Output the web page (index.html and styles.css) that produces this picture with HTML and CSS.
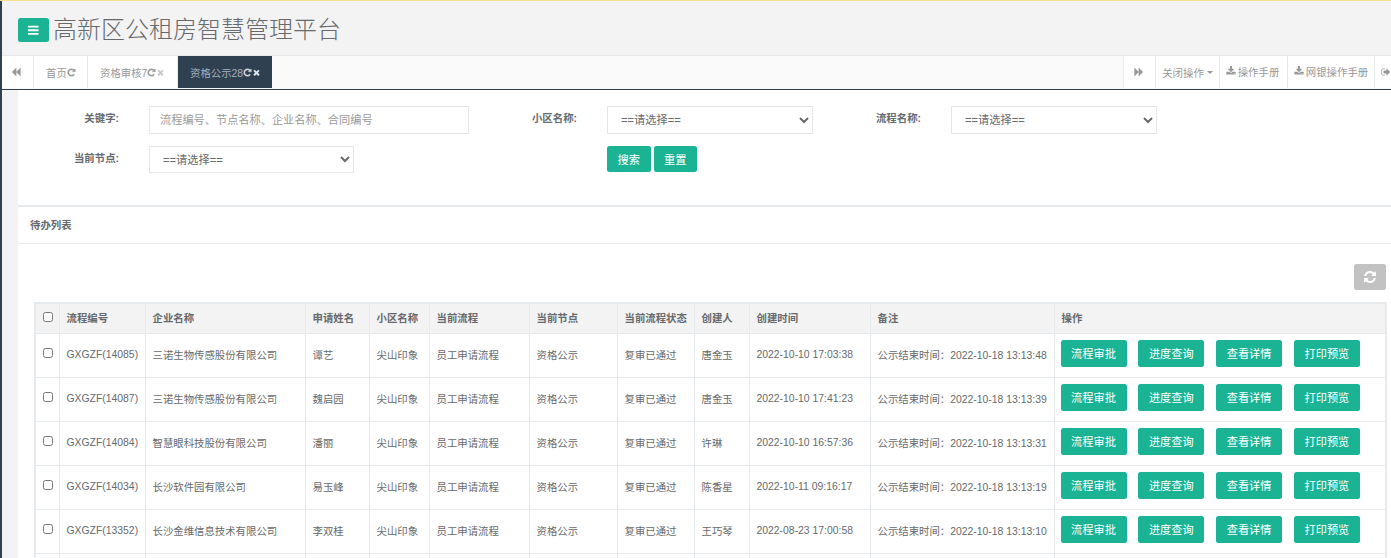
FILE: index.html
```html
<!DOCTYPE html>
<html lang="zh-CN">
<head>
<meta charset="utf-8">
<title>高新区公租房智慧管理平台</title>
<link rel="stylesheet" href="styles.css">
</head>
<body>
<svg class="sprite" xmlns="http://www.w3.org/2000/svg" aria-hidden="true">
  <symbol id="i-bars" viewBox="0 0 1792 1792"><path d="M1664 1344v128q0 26-19 45t-45 19h-1408q-26 0-45-19t-19-45v-128q0-26 19-45t45-19h1408q26 0 45 19t19 45zm0-512v128q0 26-19 45t-45 19h-1408q-26 0-45-19t-19-45v-128q0-26 19-45t45-19h1408q26 0 45 19t19 45zm0-512v128q0 26-19 45t-45 19h-1408q-26 0-45-19t-19-45v-128q0-26 19-45t45-19h1408q26 0 45 19t19 45z"/></symbol>
  <symbol id="i-back" viewBox="0 0 1792 1792"><path d="M1683 141q19-19 32-13t13 32v1472q0 26-13 32t-32-13l-710-710q-9-9-13-19v710q0 26-13 32t-32-13l-710-710q-19-19-19-45t19-45l710-710q19-19 32-13t13 32v710q4-10 13-19z"/></symbol>
  <symbol id="i-fwd" viewBox="0 0 1792 1792"><path d="M109 1651q-19 19-32 13t-13-32v-1472q0-26 13-32t32 13l710 710q9 9 13 19v-710q0-26 13-32t32 13l710 710q19 19 19 45t-19 45l-710 710q-19 19-32 13t-13-32v-710q-4 10-13 19z"/></symbol>
  <symbol id="i-refresh" viewBox="0 0 1792 1792"><path d="M1639 1056q0 5-1 7-64 268-268 434.5t-478 166.5q-146 0-282.5-55t-243.5-157l-129 129q-19 19-45 19t-45-19-19-45v-448q0-26 19-45t45-19h448q26 0 45 19t19 45-19 45l-137 137q71 66 161 102t187 36q134 0 250-65t186-179q11-17 53-117 8-23 30-23h192q13 0 22.5 9.5t9.5 22.5zm25-800v448q0 26-19 45t-45 19h-448q-26 0-45-19t-19-45 19-45l138-138q-148-137-349-137-134 0-250 65t-186 179q-11 17-53 117-8 23-30 23h-199q-13 0-22.5-9.5t-9.5-22.5v-7q65-268 270-434.5t480-166.5q146 0 284 55.5t245 156.5l130-129q19-19 45-19t45 19 19 45z"/></symbol>
  <symbol id="i-repeat" viewBox="0 0 1792 1792"><path d="M1664 256v448q0 26-19 45t-45 19h-448q-42 0-59-40-17-39 14-69l138-138q-148-137-349-137-104 0-198.5 40.5t-163.5 109.5-109.5 163.5-40.5 198.5 40.5 198.5 109.5 163.5 163.5 109.5 198.5 40.5q119 0 225-52t179-147q7-10 23-12 15 0 25 9l137 138q9 8 9.5 20.5t-7.5 22.5q-109 132-264 204.5t-327 72.5q-156 0-298-61t-245-164-164-245-61-298 61-298 164-245 245-164 298-61q147 0 284.5 55.5t244.5 156.5l130-129q29-31 70-14 39 17 39 59z"/></symbol>
  <symbol id="i-close" viewBox="0 0 1792 1792"><path d="M1490 1322q0 40-28 68l-136 136q-28 28-68 28t-68-28l-294-294-294 294q-28 28-68 28t-68-28l-136-136q-28-28-28-68t28-68l294-294-294-294q-28-28-28-68t28-68l136-136q28-28 68-28t68 28l294 294 294-294q28-28 68-28t68 28l136 136q28 28 28 68t-28 68l-294 294 294 294q28 28 28 68z"/></symbol>
  <symbol id="i-download" viewBox="0 0 1792 1792"><path d="M1344 1344q0-26-19-45t-45-19-45 19-19 45 19 45 45 19 45-19 19-45zm256 0q0-26-19-45t-45-19-45 19-19 45 19 45 45 19 45-19 19-45zm128-224v320q0 40-28 68t-68 28h-1472q-40 0-68-28t-28-68v-320q0-40 28-68t68-28h465l135 136q58 56 136 56t136-56l136-136h464q40 0 68 28t28 68zm-325-569q17 41-14 70l-448 448q-18 19-45 19t-45-19l-448-448q-31-29-14-70 17-39 59-39h256v-448q0-26 19-45t45-19h256q26 0 45 19t19 45v448h256q42 0 59 39z"/></symbol>
  <symbol id="i-signout" viewBox="0 0 1792 1792"><path d="M704 1440q0 4 1 20t.5 26.5-3 23.5-10 19.5-20.5 6.5h-320q-119 0-203.5-84.5t-84.5-203.5v-704q0-119 84.5-203.5t203.5-84.5h320q13 0 22.5 9.5t9.5 22.5q0 4 1 20t.5 26.5-3 23.5-10 19.5-20.5 6.5h-320q-66 0-113 47t-47 113v704q0 66 47 113t113 47h312l11.5 1 11.5 3 8 5.5 7 9 2 13.5zm928-544q0 26-19 45l-544 544q-19 19-45 19t-45-19-19-45v-288h-448q-26 0-45-19t-19-45v-384q0-26 19-45t45-19h448v-288q0-26 19-45t45-19 45 19l544 544q19 19 19 45z"/></symbol>
</svg>

<div class="topline"></div>
<div class="shell">
  <aside class="rail"></aside>
  <div class="main">
    <header class="header">
      <button class="menu-btn" type="button"><svg class="ico-bars"><use href="#i-bars"/></svg></button>
      <h1 class="brand">高新区公租房智慧管理平台</h1>
    </header>

    <nav class="tabbar">
      <a class="tab-arrow"><svg class="ico"><use href="#i-back"/></svg></a>
      <div class="tabs">
        <a class="tab tab-home">首页<svg class="ico"><use href="#i-repeat"/></svg></a>
        <a class="tab tab-audit">资格审核7<svg class="ico"><use href="#i-repeat"/></svg><svg class="ico ico-x"><use href="#i-close"/></svg></a>
        <a class="tab tab-active">资格公示28<svg class="ico"><use href="#i-repeat"/></svg><svg class="ico ico-x"><use href="#i-close"/></svg></a>
      </div>
      <div class="tools">
        <a class="tool tool-fwd"><svg class="ico"><use href="#i-fwd"/></svg></a>
        <a class="tool tool-close">关闭操作<span class="caret"></span></a>
        <a class="tool tool-man"><svg class="ico"><use href="#i-download"/></svg> 操作手册</a>
        <a class="tool tool-bank"><svg class="ico"><use href="#i-download"/></svg> 网银操作手册</a>
        <a class="tool tool-exit"><svg class="ico"><use href="#i-signout"/></svg></a>
      </div>
    </nav>

    <div class="body">
      <section class="filter">
        <label class="flabel">关键字:</label>
        <input class="control" type="text" placeholder="流程编号、节点名称、企业名称、合同编号">
        <label class="flabel">小区名称:</label>
        <select class="control"><option>==请选择==</option></select>
        <label class="flabel">流程名称:</label>
        <select class="control"><option>==请选择==</option></select>

        <label class="flabel">当前节点:</label>
        <select class="control control-short"><option>==请选择==</option></select>
        <span></span>
        <div class="filter-btns">
          <button class="btn btn-sm" type="button">搜索</button>
          <button class="btn btn-sm" type="button">重置</button>
        </div>
      </section>

      <section class="panel">
        <h2 class="panel-title">待办列表</h2>
        <div class="toolbar">
          <button class="refresh" type="button"><svg class="ico-refresh"><use href="#i-refresh"/></svg></button>
        </div>
        <table class="grid">
          <colgroup>
            <col class="c-check"><col class="c-no"><col class="c-co"><col class="c-name"><col class="c-area"><col class="c-flow"><col class="c-node"><col class="c-state"><col class="c-user"><col class="c-time"><col class="c-note"><col class="c-ops">
          </colgroup>
          <thead>
            <tr><th class="cell-check"><input type="checkbox"></th><th>流程编号</th><th>企业名称</th><th>申请姓名</th><th>小区名称</th><th>当前流程</th><th>当前节点</th><th>当前流程状态</th><th>创建人</th><th>创建时间</th><th>备注</th><th>操作</th></tr>
          </thead>
          <tbody>
            <tr><td class="cell-check"><input type="checkbox"></td><td>GXGZF(14085)</td><td>三诺生物传感股份有限公司</td><td>谭艺</td><td>尖山印象</td><td>员工申请流程</td><td>资格公示</td><td>复审已通过</td><td>唐金玉</td><td>2022-10-10 17:03:38</td><td>公示结束时间：2022-10-18 13:13:48</td><td><div class="ops"><button class="btn" type="button">流程审批</button><button class="btn" type="button">进度查询</button><button class="btn" type="button">查看详情</button><button class="btn" type="button">打印预览</button></div></td></tr>
            <tr><td class="cell-check"><input type="checkbox"></td><td>GXGZF(14087)</td><td>三诺生物传感股份有限公司</td><td>魏启园</td><td>尖山印象</td><td>员工申请流程</td><td>资格公示</td><td>复审已通过</td><td>唐金玉</td><td>2022-10-10 17:41:23</td><td>公示结束时间：2022-10-18 13:13:39</td><td><div class="ops"><button class="btn" type="button">流程审批</button><button class="btn" type="button">进度查询</button><button class="btn" type="button">查看详情</button><button class="btn" type="button">打印预览</button></div></td></tr>
            <tr><td class="cell-check"><input type="checkbox"></td><td>GXGZF(14084)</td><td>智慧眼科技股份有限公司</td><td>潘丽</td><td>尖山印象</td><td>员工申请流程</td><td>资格公示</td><td>复审已通过</td><td>许琳</td><td>2022-10-10 16:57:36</td><td>公示结束时间：2022-10-18 13:13:31</td><td><div class="ops"><button class="btn" type="button">流程审批</button><button class="btn" type="button">进度查询</button><button class="btn" type="button">查看详情</button><button class="btn" type="button">打印预览</button></div></td></tr>
            <tr><td class="cell-check"><input type="checkbox"></td><td>GXGZF(14034)</td><td>长沙软件园有限公司</td><td>易玉峰</td><td>尖山印象</td><td>员工申请流程</td><td>资格公示</td><td>复审已通过</td><td>陈香星</td><td>2022-10-11 09:16:17</td><td>公示结束时间：2022-10-18 13:13:19</td><td><div class="ops"><button class="btn" type="button">流程审批</button><button class="btn" type="button">进度查询</button><button class="btn" type="button">查看详情</button><button class="btn" type="button">打印预览</button></div></td></tr>
            <tr><td class="cell-check"><input type="checkbox"></td><td>GXGZF(13352)</td><td>长沙金维信息技术有限公司</td><td>李双桂</td><td>尖山印象</td><td>员工申请流程</td><td>资格公示</td><td>复审已通过</td><td>王巧琴</td><td>2022-08-23 17:00:58</td><td>公示结束时间：2022-10-18 13:13:10</td><td><div class="ops"><button class="btn" type="button">流程审批</button><button class="btn" type="button">进度查询</button><button class="btn" type="button">查看详情</button><button class="btn" type="button">打印预览</button></div></td></tr>
            <tr><td class="cell-check"></td><td></td><td></td><td></td><td></td><td></td><td></td><td></td><td></td><td></td><td></td><td></td></tr>
          </tbody>
        </table>
      </section>
    </div>
  </div>
</div>
</body>
</html>
```
FILE: styles.css
```css
* { box-sizing: border-box; }
html, body { height: 558px; overflow: hidden; }
body {
  margin: 0;
  font-family: "Liberation Sans", "Noto Sans CJK SC", sans-serif;
  font-size: 10.4px;
  color: #676a6c;
  background: #f3f3f4;
}
.sprite { display: none; }
.topline { height: 1px; background: #f8e08e; }
.shell { display: flex; height: 557px; }
.rail { width: 2px; flex: none; background: #2f4050; }
.main { flex: 1; min-width: 0; display: flex; flex-direction: column; }

.ico { width: 10px; height: 10px; fill: currentColor; flex: none; }

/* header */
.header {
  height: 55px;
  flex: none;
  display: flex;
  align-items: center;
  padding: 4px 0 0 16px;
  background: #f3f3f4;
  border-bottom: 1px solid #e7eaec;
}
.menu-btn {
  width: 31px;
  height: 24px;
  padding: 0;
  border: 0;
  border-radius: 2.5px;
  background: #1ab394;
  color: #fff;
  display: flex;
  align-items: center;
  justify-content: center;
}
.ico-bars { width: 12.5px; height: 12.5px; fill: currentColor; }
.brand { margin: 0 0 0 4px; font-size: 24px; font-weight: 300; line-height: 30px; color: #676a6c; }

/* tabs */
.tabbar {
  height: 34px;
  flex: none;
  display: flex;
  padding-bottom: 1px;
  background: #fafafa;
  border-bottom: 1px solid #2f4050;
  color: #999;
}
.tab-arrow {
  width: 32px;
  flex: none;
  display: flex;
  align-items: center;
  justify-content: center;
  background: #fff;
  border-right: 1px solid #e7eaec;
  padding-right: 3px;
}
.tabs { flex: 1; display: flex; }
.tab {
  display: flex;
  align-items: center;
  padding-left: 12px;
  background: #fff;
  border-right: 1px solid #e7eaec;
}
.tab-home { width: 54px; }
.tab-audit { width: 90px; }
.tab-active { width: 94px; background: #2f4050; color: #a7b1c2; border-right: 0; }
.tab .ico { width: 9px; height: 9px; stroke: currentColor; stroke-width: 60; }
.tab .ico-x { width: 9px; height: 9px; color: #c8c8c8; stroke: none; }
.tab-active .ico { color: #d5dae2; }
.tab-active .ico-x { color: #dfe3ea; }
.tools { display: flex; flex: none; background: #fff; }
.tool {
  display: flex;
  align-items: center;
  gap: 2px;
  justify-content: center;
  border-left: 1px solid #e7eaec;
  white-space: nowrap;
}
.tool-fwd { width: 32px; padding-right: 2px; }
.tool-close { width: 64px; }
.tool-man { width: 68px; padding-bottom: 2px; padding-right: 2px; }
.tool-bank { width: 87px; padding-bottom: 2px; }
.tool-exit { width: 17px; justify-content: flex-start; padding-left: 6px; }
.tool-man .ico, .tool-bank .ico { color: #999; }
.caret {
  width: 0;
  height: 0;
  margin-left: 1px;
  margin-top: 1px;
  border-left: 3.2px solid transparent;
  border-right: 3.2px solid transparent;
  border-top: 3.2px solid #999;
}

/* content */
.body {
  flex: 1;
  min-height: 0;
  margin-left: 16px;
  background: #fff;
  overflow: hidden;
}
.filter {
  height: 117px;
  padding-top: 16px;
  display: grid;
  grid-template-columns: 101px 350px 108px 236px 108px 236px;
  grid-auto-rows: 28px;
  row-gap: 12px;
  align-content: start;
  border-bottom: 2px solid #e7eaec;
}
.flabel {
  font-weight: 700;
  text-align: right;
  line-height: 25px;
  white-space: nowrap;
}
.control {
  height: 28px;
  margin-left: 30px;
  padding: 0 10px;
  border: 1px solid #e5e6e7;
  background: #fff;
  color: #676a6c;
  font: inherit;
  font-size: 11.2px;
  border-radius: 0;
}
.control::placeholder { color: #999; opacity: 1; }
input.control { width: 320px; }
select.control { width: 206px; padding: 0 9px; }
select.control-short { width: 205px; height: 27px; }
.filter-btns { margin-left: 30px; display: flex; gap: 3px; align-items: flex-start; white-space: nowrap; }

.btn {
  width: 66px;
  height: 27px;
  padding: 0;
  border: 0;
  border-radius: 2.5px;
  background: #1ab394;
  color: #fff;
  font: inherit;
  font-size: 11.2px;
}
.btn-sm { width: 43.5px; height: 26px; }

/* list panel */
.panel-title {
  margin: 0;
  height: 37px;
  padding-left: 12px;
  font-size: 10.4px;
  font-weight: 700;
  line-height: 37px;
  border-bottom: 1px solid #e7eaec;
}
.toolbar { height: 58px; padding: 20px 5px 0 0; display: flex; justify-content: flex-end; align-items: flex-start; }
.refresh {
  width: 32px;
  height: 26px;
  padding: 0;
  border: 0;
  border-radius: 2.5px;
  background: #c2c2c2;
  color: #fff;
  display: flex;
  align-items: center;
  justify-content: center;
}
.ico-refresh { width: 14px; height: 14px; fill: currentColor; }

.grid {
  margin-left: 16px;
  width: 1351px;
  table-layout: fixed;
  border-collapse: collapse;
  border: 2px solid #e7eaec;
}
.c-check { width: 24px; }
.c-no { width: 86px; }
.c-co { width: 160px; }
.c-name { width: 64px; }
.c-area { width: 60px; }
.c-flow { width: 100px; }
.c-node { width: 88px; }
.c-state { width: 77px; }
.c-user { width: 55px; }
.c-time { width: 121px; }
.c-note { width: 184px; }
.c-ops { width: 332px; }
.grid th, .grid td {
  border: 1px solid #e7eaec;
  padding: 0 0 2px 7px;
  text-align: left;
  white-space: nowrap;
}
.grid th { height: 30px; background: #f3f3f4; font-weight: 700; }
.grid td { height: 44px; }
.grid th.cell-check { padding: 0 0 2px 7px; }
.grid td.cell-check { padding: 0 0 4px 7px; }
.grid input[type="checkbox"] { display: block; width: 10.4px; height: 10.4px; margin: 0; }
.ops { display: flex; gap: 11.8px; margin-left: -1px; padding-bottom: 2px; }
```
